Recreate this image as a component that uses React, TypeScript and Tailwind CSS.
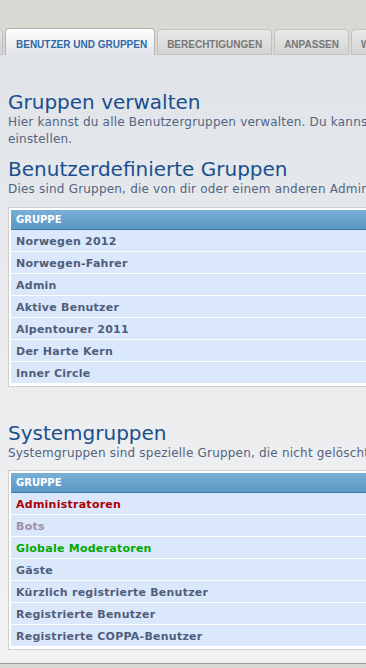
const customGroups = [
  "Norwegen 2012",
  "Norwegen-Fahrer",
  "Admin",
  "Aktive Benutzer",
  "Alpentourer 2011",
  "Der Harte Kern",
  "Inner Circle",
];

const systemGroups = [
  { name: "Administratoren", color: "text-[#aa0000]" },
  { name: "Bots", color: "text-[#9e8da7]" },
  { name: "Globale Moderatoren", color: "text-[#00aa00]" },
  { name: "Gäste", color: "text-[#4f5e7c]" },
  { name: "Kürzlich registrierte Benutzer", color: "text-[#4f5e7c]" },
  { name: "Registrierte Benutzer", color: "text-[#4f5e7c]" },
  { name: "Registrierte COPPA-Benutzer", color: "text-[#4f5e7c]" },
];

function GroupTable({ rows }: { rows: { name: string; color: string }[] }) {
  return (
    <div className="w-[740px] border border-[#cfcfcf] bg-white p-[2px]">
      <div className="h-[20px] border-b border-[#3b7aa6] bg-gradient-to-b from-[#78afd5] to-[#5b98c6] pl-[5px] text-[10px] font-bold leading-[19px] text-white">
        GRUPPE
      </div>
      {rows.map((row, index) => (
        <div
          key={index}
          className={`h-[22px] border-b border-white bg-[#dbe8fb] pl-[5px] pt-[1px] text-[11px] font-bold leading-[21px] tracking-[0.25px] ${row.color}`}
        >
          {row.name}
        </div>
      ))}
    </div>
  );
}

function App() {
  return (
    <div
      className="w-[366px] h-[668px] overflow-hidden bg-[#dad8d2]"
      style={{ fontFamily: '"DejaVu Sans", Verdana, sans-serif' }}
    >
      {/* tabs */}
      <div
        className="flex items-end gap-[2px] pt-[28px] whitespace-nowrap text-[10px] font-bold"
        style={{ fontFamily: '"Liberation Sans", Arial, sans-serif' }}
      >
        <div className="ml-[-17px] h-[26px] w-[20px] shrink-0 rounded-t-[4px] border border-[#bdbdbd] bg-gradient-to-b from-[#e6e6e6] to-[#d2d2d2]" />
        <div className="h-[27px] shrink-0 rounded-t-[4px] border border-b-0 border-[#b4b4b4] bg-gradient-to-b from-[#ffffff] to-[#e1e4e9] pl-[10px] pr-[7px] pt-[8px] text-[#2f68a3]">
          BENUTZER UND GRUPPEN
        </div>
        <div className="h-[26px] shrink-0 rounded-t-[4px] border border-[#c2c2c2] bg-gradient-to-b from-[#e8e8e8] to-[#d4d4d4] px-[9px] pt-[7px] text-[#777777]">
          BERECHTIGUNGEN
        </div>
        <div className="h-[26px] shrink-0 rounded-t-[4px] border border-[#c2c2c2] bg-gradient-to-b from-[#e8e8e8] to-[#d4d4d4] px-[9px] pt-[7px] text-[#777777]">
          ANPASSEN
        </div>
        <div className="h-[26px] shrink-0 rounded-t-[4px] border border-[#c2c2c2] bg-gradient-to-b from-[#e8e8e8] to-[#d4d4d4] px-[9px] pt-[7px] text-[#777777]">
          WARTUNG
        </div>
      </div>

      {/* panel */}
      <div className="w-[760px] border-b border-[#9a9a9a] bg-gradient-to-b from-[#e0e4e9] via-[#ebecee] to-[#f2f2f2] pl-[8px] pt-[35px] pb-[13px]">
        <h1 className="text-[20px] leading-[24px] text-[#1a4f8e]">Gruppen verwalten</h1>
        <p className="text-[12px] leading-[17px] tracking-[0.2px] text-[#536482]">
          <span className="whitespace-nowrap">
            Hier kannst du alle Benutzergruppen verwalten. Du kannst Gruppen löschen, erstellen und bestehende Gruppen bearbeiten.
          </span>
          <br />
          einstellen.
        </p>

        <h2 className="mt-[9px] text-[20px] leading-[24px] text-[#1a4f8e]">Benutzerdefinierte Gruppen</h2>
        <p className="whitespace-nowrap text-[12px] leading-[17px] tracking-[0.2px] text-[#536482]">
          Dies sind Gruppen, die von dir oder einem anderen Administrator dieses Boards erstellt wurden.
        </p>
        <div className="mt-[9px]">
          <GroupTable rows={customGroups.map((name) => ({ name, color: "text-[#4f5e7c]" }))} />
        </div>

        <h2 className="mt-[34px] text-[20px] leading-[24px] text-[#1a4f8e]">Systemgruppen</h2>
        <p className="whitespace-nowrap text-[12px] leading-[17px] tracking-[0.2px] text-[#536482]">
          Systemgruppen sind spezielle Gruppen, die nicht gelöscht oder direkt bearbeitet werden können.
        </p>
        <div className="mt-[8px]">
          <GroupTable rows={systemGroups} />
        </div>
      </div>
    </div>
  );
}

export default App;
